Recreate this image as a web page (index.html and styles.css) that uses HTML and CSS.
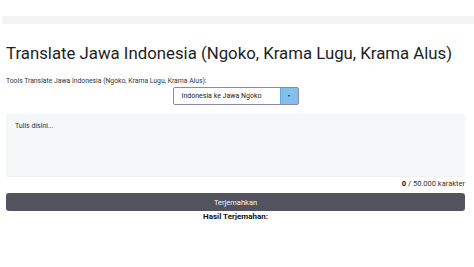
FILE: index.html
```html
<!DOCTYPE html>
<html lang="id">
<head>
    <meta charset="UTF-8">
    <meta name="viewport" content="width=device-width, initial-scale=1.0">
    <title>Translate Jawa Indonesia</title>
    <link rel="stylesheet" href="styles.css">
</head>
<body>
    <div class="topbar"></div>
    <div class="container">
        <h1 class="title">Translate Jawa Indonesia (Ngoko, Krama Lugu, Krama Alus)</h1>
        <label class="label" for="mode">Tools Translate Jawa Indonesia (Ngoko, Krama Lugu, Krama Alus):</label>
        <div class="select-row">
            <div class="select" id="mode">
                <span class="select-text">Indonesia ke Jawa Ngoko</span>
                <span class="select-btn"><span class="arrow"></span></span>
            </div>
        </div>
        <textarea class="input" placeholder="Tulis disini..."></textarea>
        <div class="counter"><b>0</b> / 50.000 karakter</div>
        <button class="submit">Terjemahkan</button>
        <div class="result">Hasil Terjemahan:</div>
    </div>
</body>
</html>
```

FILE: styles.css
```css
body {
    margin: 0;
    background-color: white;
    font-family: Roboto, "Open Sans", sans-serif;
    color: #222;
}
.topbar {
    height: 8px;
    margin: 16px 0 0 2px;
    background-color: #f4f4f5;
}
.container {
    padding: 0 9px 0 6px;
}
.title {
    margin: 15px 0 0 0;
    white-space: nowrap;
    font-weight: 400;
    font-size: 16.8px;
    line-height: 28px;
    color: #1e1e1e;
}
.label {
    display: block;
    margin-top: 9px;
    font-size: 6.8px;
    line-height: 10px;
    color: #333;
}
.select-row {
    display: flex;
    justify-content: center;
    margin-top: 1px;
}
.select {
    display: flex;
    align-items: stretch;
    width: 124px;
    height: 16px;
    border: 1px solid #8c88a8;
    border-radius: 2px;
}
.select-text {
    flex: 1;
    font-size: 7px;
    line-height: 16px;
    padding-left: 8px;
    color: #222;
}
.select-btn {
    width: 17px;
    background-color: #82c0ec;
    border-left: 1px solid #6aa8d6;
    display: flex;
    justify-content: center;
    align-items: center;
}
.arrow {
    width: 0;
    height: 0;
    border-left: 1.5px solid transparent;
    border-right: 1.5px solid transparent;
    border-top: 2px solid #1d2b5a;
}
.input {
    display: block;
    box-sizing: border-box;
    width: 100%;
    height: 62px;
    margin-top: 9px;
    padding: 8px 9px;
    background-color: #f6f7f9;
    border: none;
    border-radius: 2px;
    box-shadow: 0 1px 1px rgba(0, 0, 0, 0.06);
    font-family: inherit;
    font-size: 7px;
    resize: none;
}
.input::placeholder {
    color: #333;
}
.counter {
    text-align: right;
    margin-top: 3px;
    font-size: 7.5px;
    line-height: 10px;
    color: #333;
}
.counter b {
    color: #111;
}
.submit {
    display: block;
    width: 100%;
    height: 18px;
    margin-top: 4px;
    background-color: #52535f;
    color: #f2f2f2;
    border: none;
    border-radius: 3px;
    font-family: inherit;
    font-size: 7.5px;
    cursor: pointer;
}
.result {
    text-align: center;
    font-weight: 700;
    font-size: 8px;
    line-height: 11px;
    color: #111;
}
```
